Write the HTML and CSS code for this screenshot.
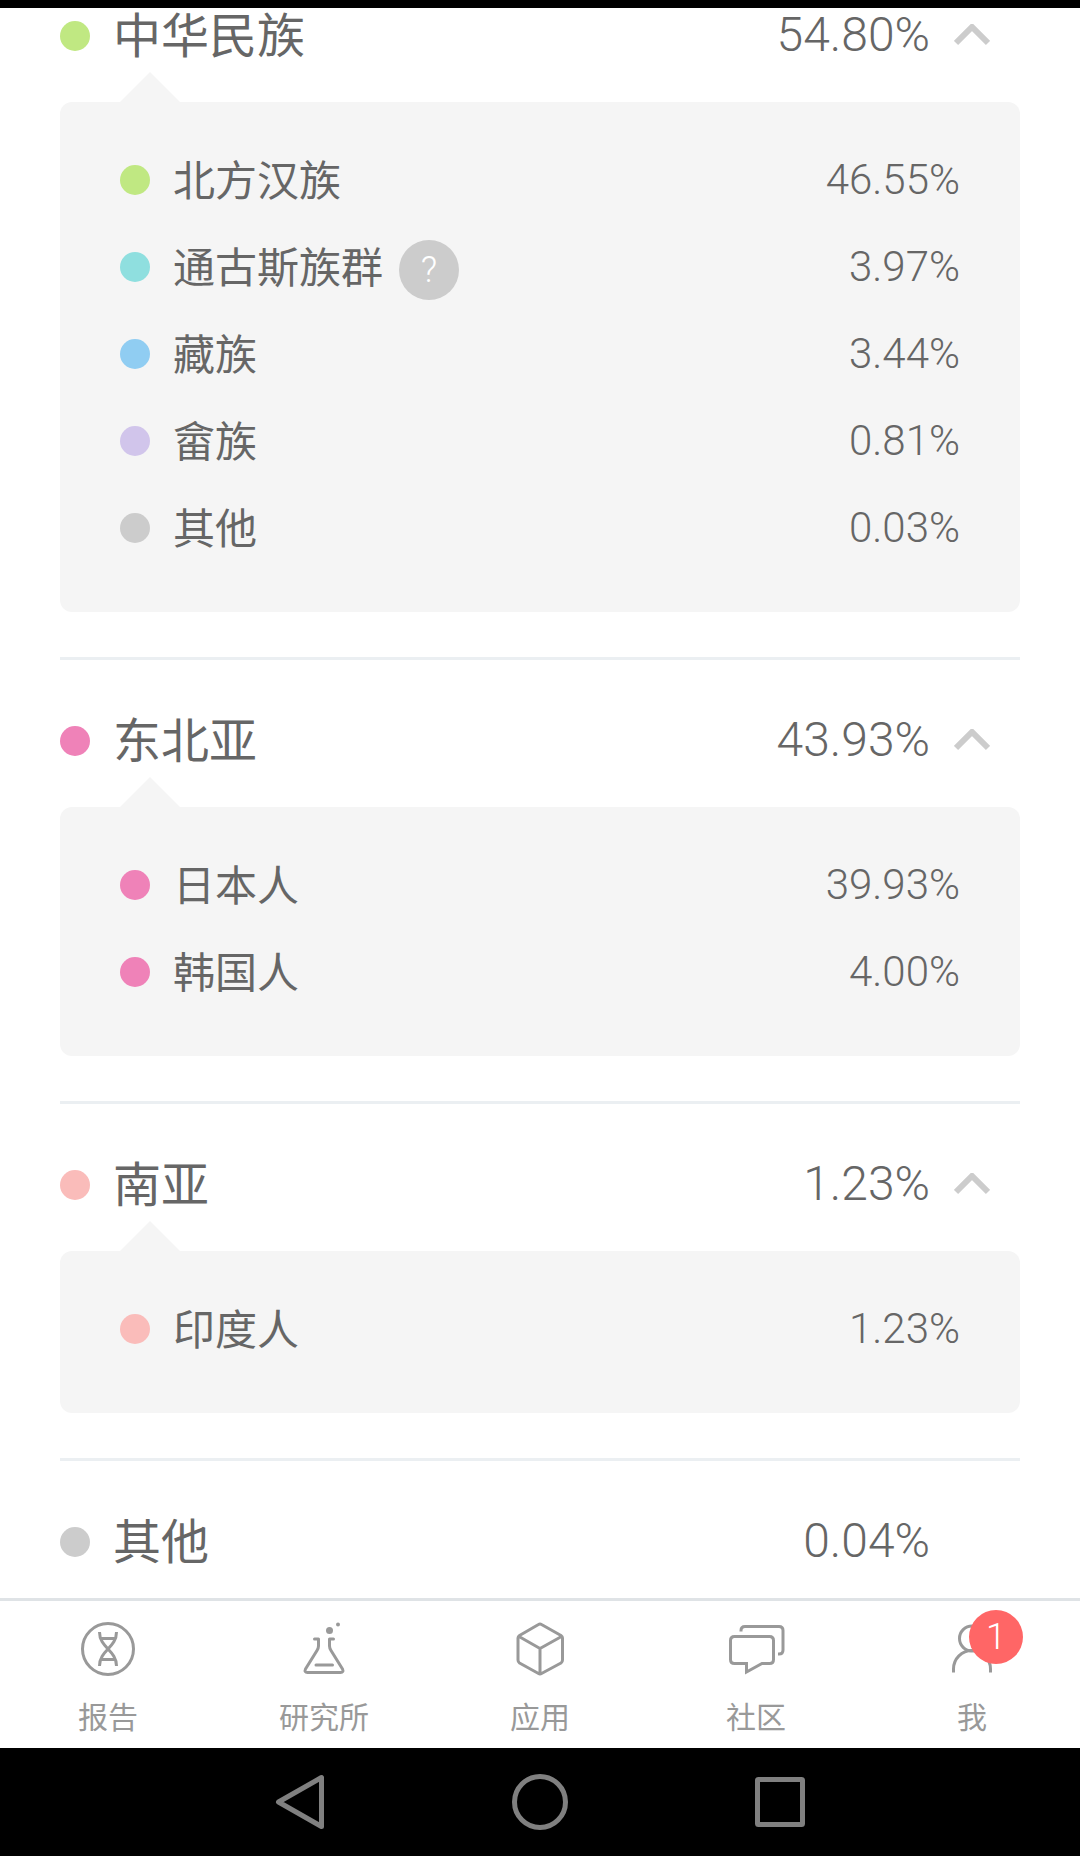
FILE: index.html
```html
<!DOCTYPE html>
<html lang="zh-CN">
<head>
  <meta charset="UTF-8">
  <meta name="viewport" content="width=device-width, initial-scale=1.0">
  <title>祖源分析</title>
  <link rel="stylesheet" href="styles.css">
</head>
<body>
  <div class="status-bar"></div>

  <main class="content">
    <section class="group">
      <button type="button" class="group-header" aria-expanded="true" onclick="toggleGroup(this)">
        <span class="dot green"></span>
        <span class="name">中华民族</span>
        <span class="value">54.80%</span>
        <svg class="chevron" viewBox="0 0 36 24"><path d="M2 19 L18 3 L34 19"/></svg>
      </button>
      <ul class="panel">
        <li class="row"><span class="dot green"></span><span class="name">北方汉族</span><span class="value">46.55%</span></li>
        <li class="row"><span class="dot teal"></span><span class="name">通古斯族群</span><button type="button" class="help">?</button><span class="value">3.97%</span></li>
        <li class="row"><span class="dot blue"></span><span class="name">藏族</span><span class="value">3.44%</span></li>
        <li class="row"><span class="dot purple"></span><span class="name">畲族</span><span class="value">0.81%</span></li>
        <li class="row"><span class="dot gray"></span><span class="name">其他</span><span class="value">0.03%</span></li>
      </ul>
    </section>

    <section class="group">
      <button type="button" class="group-header" aria-expanded="true" onclick="toggleGroup(this)">
        <span class="dot pink"></span>
        <span class="name">东北亚</span>
        <span class="value">43.93%</span>
        <svg class="chevron" viewBox="0 0 36 24"><path d="M2 19 L18 3 L34 19"/></svg>
      </button>
      <ul class="panel">
        <li class="row"><span class="dot pink"></span><span class="name">日本人</span><span class="value">39.93%</span></li>
        <li class="row"><span class="dot pink"></span><span class="name">韩国人</span><span class="value">4.00%</span></li>
      </ul>
    </section>

    <section class="group">
      <button type="button" class="group-header" aria-expanded="true" onclick="toggleGroup(this)">
        <span class="dot salmon"></span>
        <span class="name">南亚</span>
        <span class="value">1.23%</span>
        <svg class="chevron" viewBox="0 0 36 24"><path d="M2 19 L18 3 L34 19"/></svg>
      </button>
      <ul class="panel">
        <li class="row"><span class="dot salmon"></span><span class="name">印度人</span><span class="value">1.23%</span></li>
      </ul>
    </section>

    <section class="group">
      <div class="group-header no-children">
        <span class="dot gray"></span>
        <span class="name">其他</span>
        <span class="value">0.04%</span>
      </div>
    </section>
  </main>

  <footer class="bottom">
    <nav class="tabs">
      <a class="tab" href="#report">
        <svg class="tab-icon" viewBox="0 0 60 60">
          <circle cx="30" cy="30" r="25.5"/>
          <path d="M21.500 13 C21.500 29 38.500 31 38.500 47 M38.500 13 C38.500 29 21.500 31 21.500 47 M23 19.500 H37 M23 40.500 H37"/>
        </svg>
        <span>报告</span>
      </a>
      <a class="tab" href="#lab">
        <svg class="tab-icon" viewBox="0 0 60 60">
          <path class="round" d="M20.500 20 H24.500 V27 Q24.500 29 23 31.500 L11.500 50 Q10 53.500 13.500 53.500 H46.500 Q50 53.500 48.500 50 L37 31.500 Q35.500 29 35.500 27 V20 H39.500 M22 46 H38.500"/>
          <circle class="solid" cx="35.500" cy="11.500" r="3.500"/>
          <circle class="solid" cx="44" cy="5.500" r="2"/>
        </svg>
        <span>研究所</span>
      </a>
      <a class="tab" href="#apps">
        <svg class="tab-icon" viewBox="0 0 60 60">
          <path class="round" d="M28.500 5.500 Q30 4.500 31.500 5.500 L51 16.500 Q52.500 17.500 52.500 19 V41 Q52.500 43 51 44 L31.500 54.500 Q30 55.500 28.500 54.500 L9.500 44 Q8 43 8 41 V19 Q8 17.500 9.500 16.500 Z M9 17.500 L30 29.500 L51.500 17.500 M30 29.500 V54"/>
        </svg>
        <span>应用</span>
      </a>
      <a class="tab" href="#community">
        <svg class="tab-icon" viewBox="0 0 60 60">
          <path d="M8.500 17.500 H43.500 Q47.500 17.500 47.500 21.500 V40.500 Q47.500 44.500 43.500 44.500 H36 L20.500 53 V44.500 H8.500 Q4.500 44.500 4.500 40.500 V21.500 Q4.500 17.500 8.500 17.500 Z M15 12.500 V11.500 Q15 7.500 19 7.500 H53 Q57 7.500 57 11.500 V31 Q57 35 53 35 H52"/>
        </svg>
        <span>社区</span>
      </a>
      <a class="tab" href="#me">
        <svg class="tab-icon" viewBox="0 0 60 60">
          <circle cx="30" cy="19.500" r="12.500"/>
          <path d="M11.500 53.500 V50 A18.500 18.500 0 0 1 48.500 50 V53.500"/>
        </svg>
        <span class="badge">1</span>
        <span>我</span>
      </a>
    </nav>

    <div class="system-nav">
      <button type="button" aria-label="返回">
        <svg viewBox="0 0 60 60"><path d="M51.500 5.500 V54.500 L8.500 30 Z"/></svg>
      </button>
      <button type="button" aria-label="主屏幕">
        <svg viewBox="0 0 60 60"><circle cx="30" cy="30" r="25.500"/></svg>
      </button>
      <button type="button" aria-label="最近任务">
        <svg viewBox="0 0 60 60"><rect x="7.500" y="7.500" width="45" height="45" rx="1"/></svg>
      </button>
    </div>
  </footer>

  <script>
    function toggleGroup(header) {
      const open = header.getAttribute('aria-expanded') === 'true';
      header.setAttribute('aria-expanded', String(!open));
      header.nextElementSibling.hidden = open;
    }
  </script>
</body>
</html>
```
FILE: styles.css
```css
* {
  margin: 0;
  padding: 0;
  box-sizing: border-box;
}

body {
  display: flex;
  flex-direction: column;
  min-height: 100vh;
  background: #fff;
  color: #666;
  font-family: Roboto, "Noto Sans CJK SC", sans-serif;
  font-weight: 300;
}

button {
  border: none;
  background: none;
  color: inherit;
  font: inherit;
  cursor: pointer;
}

.status-bar {
  height: 8px;
  background: #000;
}

.content {
  flex: 1;
  padding: 0 60px;
}

/* Groups */
.group {
  padding: 54px 0 45px;
  border-top: 3px solid #ebeff2;
}

.group:first-child {
  padding-top: 1px;
  border-top: none;
}

.group:last-child {
  padding-bottom: 0;
}

.group-header {
  display: flex;
  align-items: center;
  width: 100%;
  height: 54px;
  padding-right: 30px;
  font-size: 48px;
  line-height: 54px;
  text-align: left;
}

.no-children {
  padding-right: 90px;
}

.dot {
  flex: none;
  width: 30px;
  height: 30px;
  border-radius: 50%;
  margin-right: 23px;
}

.green { background: #c0e882; }
.teal { background: #8fdfdf; }
.blue { background: #90cdf2; }
.purple { background: #d1c5eb; }
.gray { background: #ccc; }
.pink { background: #ef82b8; }
.salmon { background: #fabcba; }

.name {
  padding-bottom: 4px;
  font-family: "Noto Sans CJK SC", sans-serif;
  font-weight: 400;
}

.value {
  margin-left: auto;
}

.group-header .name {
  padding-bottom: 8px;
}

.group-header .value {
  padding-bottom: 2px;
}

.chevron {
  width: 36px;
  height: 24px;
  margin-left: 24px;
  fill: none;
  stroke: #ccc;
  stroke-width: 6;
}

[aria-expanded="false"] .chevron {
  transform: rotate(180deg);
}

/* Panel with the small arrow on top */
.panel {
  position: relative;
  margin-top: 39px;
  padding: 34px 60px 41px;
  border-radius: 12px;
  background: #f5f5f5;
  list-style: none;
}

.panel::before {
  content: "";
  position: absolute;
  left: 60px;
  bottom: 100%;
  border: 30px solid transparent;
  border-top: none;
  border-bottom-color: #f5f5f5;
}

.row {
  display: flex;
  align-items: center;
  height: 87px;
  font-size: 42px;
}

.help {
  width: 60px;
  height: 60px;
  margin: 6px 0 0 16px;
  border-radius: 50%;
  background: #ccc;
  color: #fff;
  font-size: 36px;
}

/* Bottom bars */
.bottom {
  position: sticky;
  bottom: 0;
}

.tabs {
  display: flex;
  height: 150px;
  border-top: 3px solid #dfe3e6;
  background: #fff;
}

.tab {
  position: relative;
  flex: 1;
  display: flex;
  flex-direction: column;
  align-items: center;
  gap: 16px;
  padding-top: 18px;
  color: #999;
  font-family: "Noto Sans CJK SC", sans-serif;
  font-size: 30px;
  font-weight: 400;
  line-height: 40px;
  text-decoration: none;
}

.tab-icon {
  width: 60px;
  height: 60px;
  fill: none;
  stroke: #999;
  stroke-width: 3;
}

.round {
  stroke-linecap: round;
  stroke-linejoin: round;
}

.solid {
  fill: #999;
  stroke: none;
}

.badge {
  position: absolute;
  top: 9px;
  right: 57px;
  width: 54px;
  height: 54px;
  border-radius: 50%;
  background: #f66;
  color: #fff;
  font-family: Roboto, sans-serif;
  font-size: 36px;
  font-weight: 300;
  line-height: 54px;
  text-align: center;
}

.system-nav {
  display: flex;
  justify-content: center;
  gap: 180px;
  height: 108px;
  background: #000;
}

.system-nav svg {
  display: block;
  width: 60px;
  height: 60px;
  fill: none;
  stroke: #808080;
  stroke-width: 5;
  stroke-linejoin: round;
}
```
